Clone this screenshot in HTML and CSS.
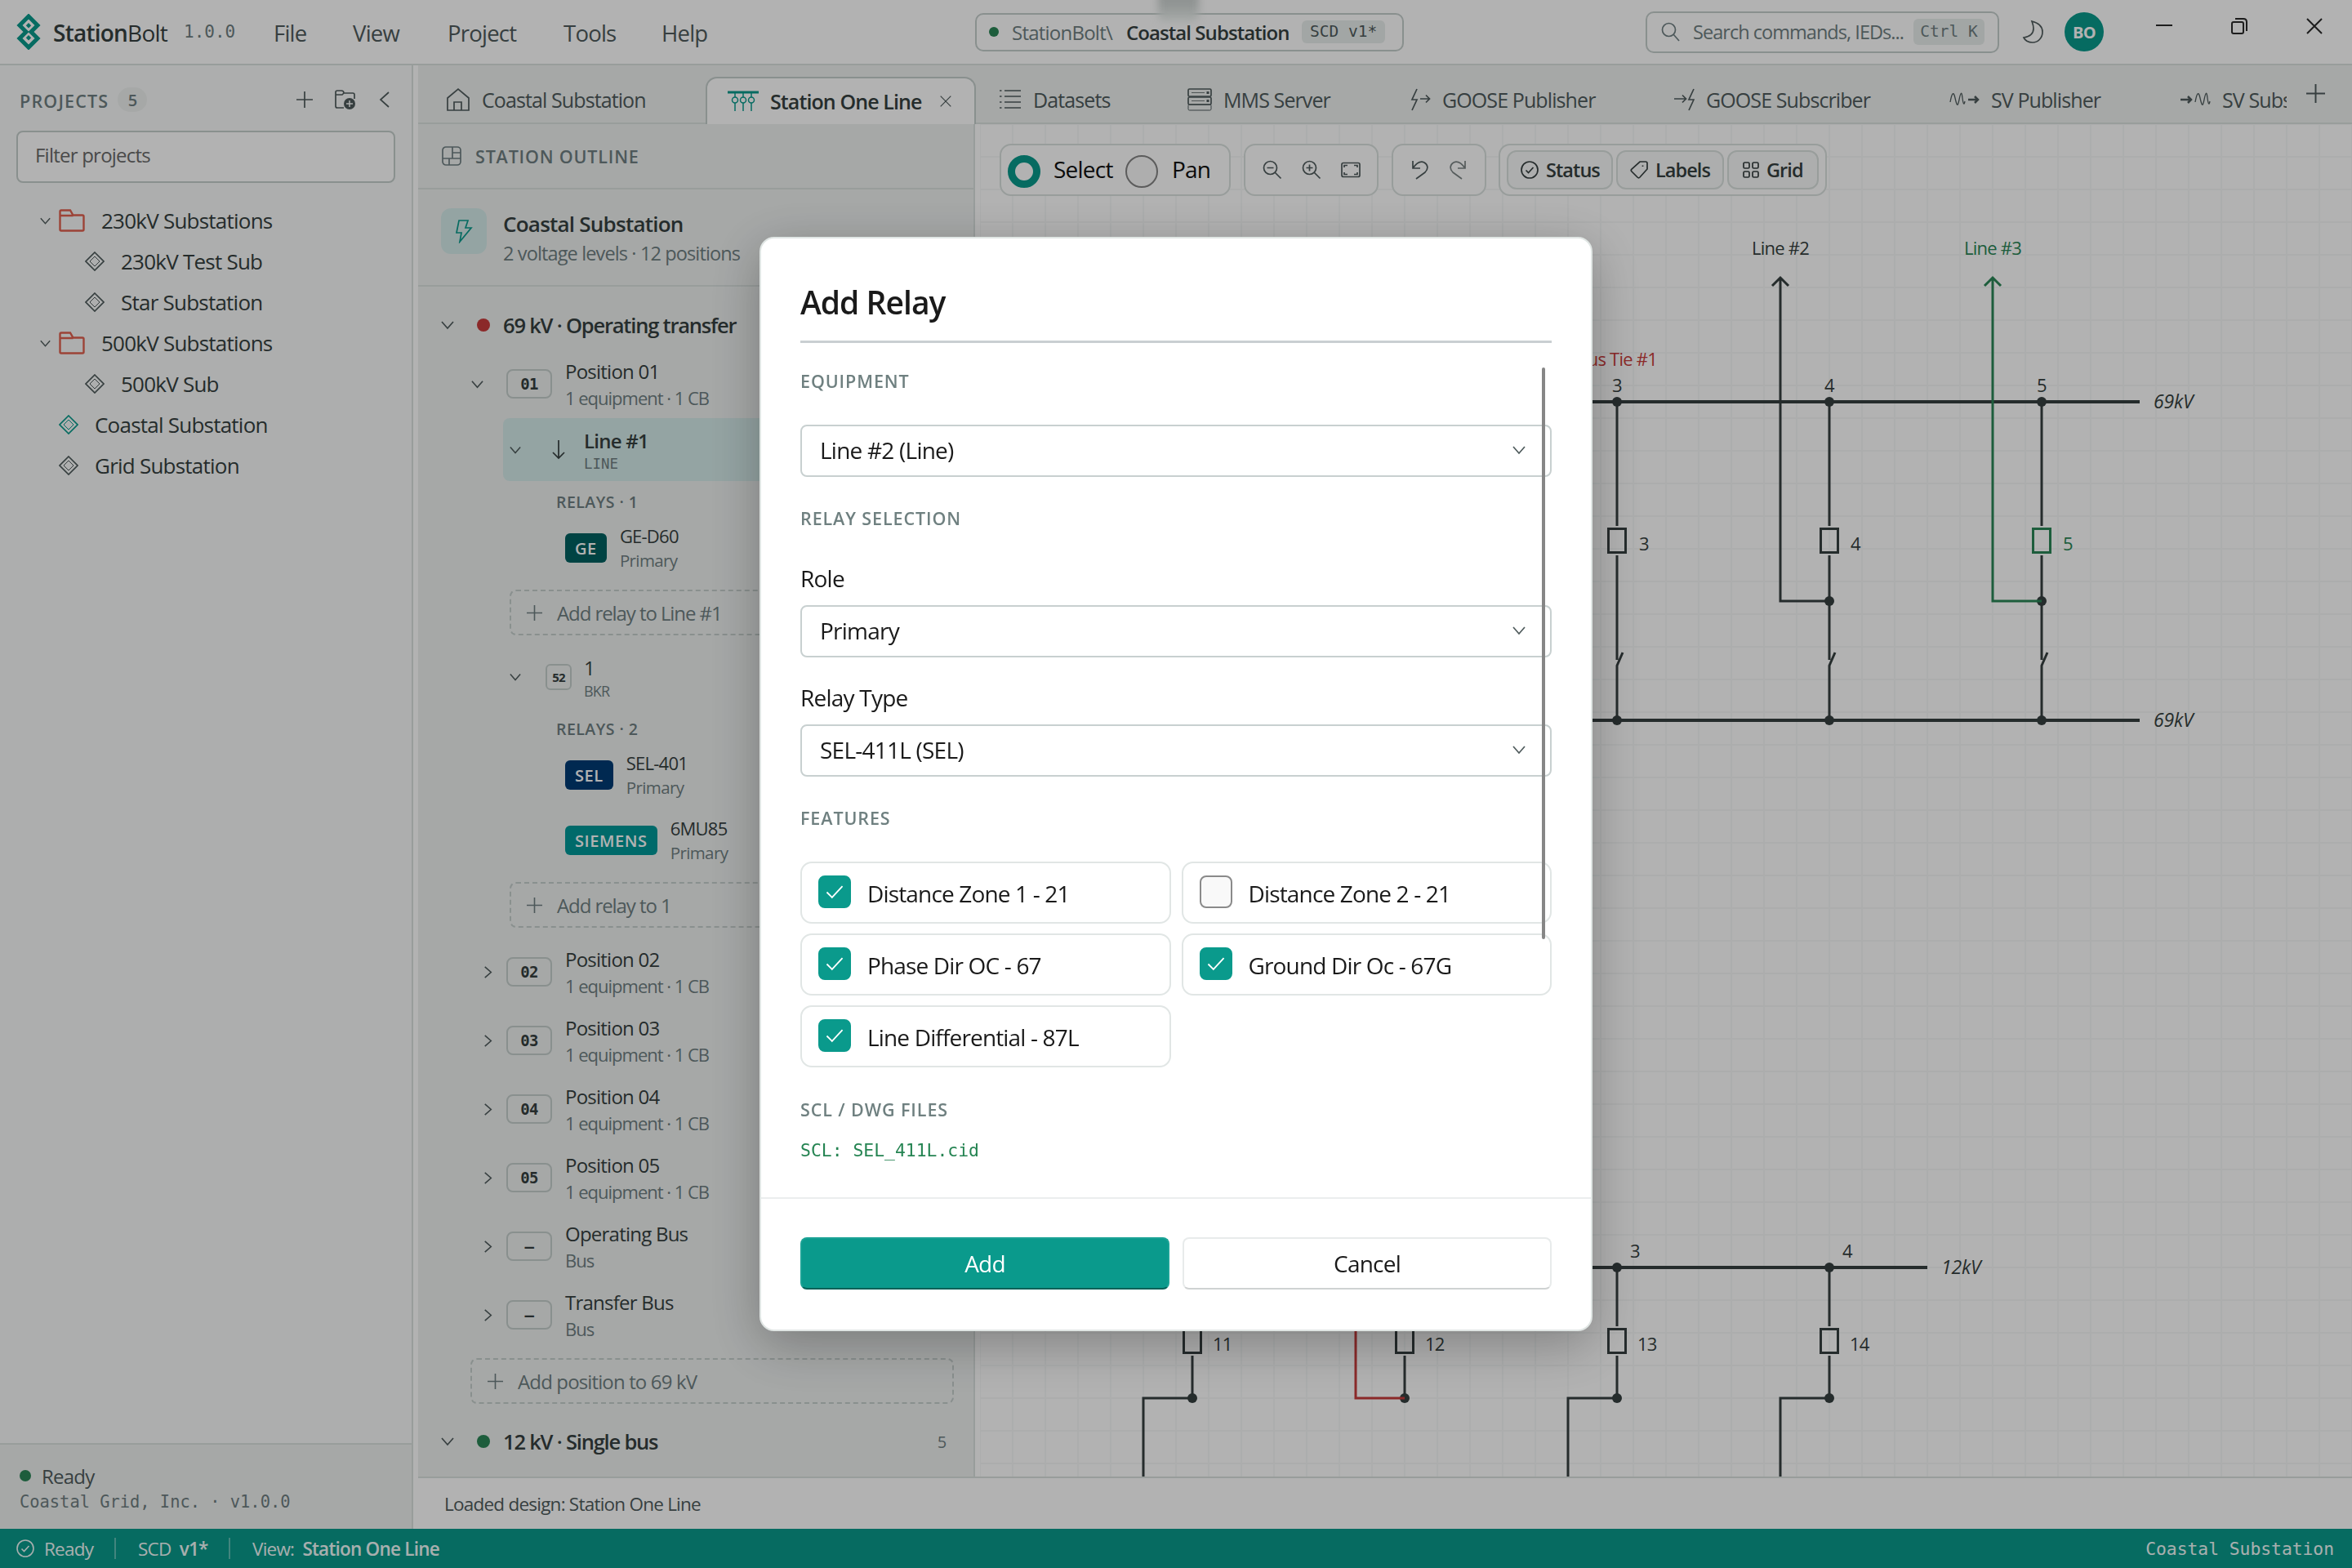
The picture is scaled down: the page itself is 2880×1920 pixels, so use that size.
FILE: index.html
```html
<!DOCTYPE html>
<html lang="en">
<head>
<meta charset="UTF-8">
<meta name="viewport" content="width=device-width, initial-scale=1.0">
<title>StationBolt</title>
<link rel="stylesheet" href="styles.css">
</head>
<body>
<!-- Icon sprite -->
<svg class="sprite">
<symbol id="i-down" viewBox="0 0 16 16"><path d="M1 4l7 8 7-8"/></symbol>
<symbol id="i-right" viewBox="0 0 16 16"><path d="M4 1l8 7-8 7"/></symbol>
<symbol id="i-left" viewBox="0 0 20 20"><path d="M15 1L5 10l10 9"/></symbol>
<symbol id="i-plus" viewBox="0 0 20 20"><path d="M10 0v20M0 10h20"/></symbol>
<symbol id="i-x" viewBox="0 0 20 20"><path d="M1 1l18 18M19 1L1 19"/></symbol>
<symbol id="i-folder" viewBox="0 0 32 28"><path d="M1.500 8V3q0-1.500 1.500-1.500h11l3.500 6H29q1.500 0 1.500 1.500v16q0 1.500-1.500 1.500H3q-1.500 0-1.500-1.500V8h16"/></symbol>
<symbol id="i-diamond" viewBox="0 0 24 24"><path d="M12 1l11 11-11 11L1 12z"/><path stroke-width="1" d="M12 6l6 6-6 6-6-6z"/></symbol>
<symbol id="i-check" viewBox="0 0 20 16"><path d="M1 8l6 6L19 1"/></symbol>
<symbol id="i-okay" viewBox="0 0 22 22"><circle cx="11" cy="11" r="10"/><path d="M6.500 11.500l3 3 6-6.500"/></symbol>
</svg>

<header class="titlebar">
<svg class="logo" viewBox="0 0 30 44"><path d="M15 3l11 11-8 8 8 8-11 11L4 30l8-8-8-8z"/><path class="logo-dot" d="M15 11l3.200 3.200-3.200 3.200-3.200-3.200zM15 26l3.200 3.200-3.200 3.200-3.200-3.200z"/></svg>
<span class="brand"><b>Station</b>Bolt</span>
<span class="version mono">1.0.0</span>
<nav class="menu"><span>File</span><span>View</span><span>Project</span><span>Tools</span><span>Help</span></nav>
<div class="crumb"><i class="dot"></i><span class="crumb-root">StationBolt\</span><b>Coastal Substation</b><span class="chip mono">SCD v1*</span></div>
<div class="search"><svg class="ic" width="24" height="24" viewBox="0 0 24 24"><circle cx="9.500" cy="9.500" r="8"/><path d="M15 15l7 8"/></svg><span>Search commands, IEDs...</span><kbd class="mono">Ctrl K</kbd></div>
<svg class="moon ic" width="28" height="30" viewBox="0 0 28 30"><path d="M13 2c8 2 13 6 13 13 0 8-6 13-12 13-5 0-9-2-11-6 6-1 12-4 12-11 0-4-1-6-2-9z"/></svg>
<span class="avatar">BO</span>
<div class="winctl">
<svg class="ic" width="20" height="20" viewBox="0 0 20 20"><path d="M0 9h20"/></svg>
<svg class="ic" width="20" height="20" viewBox="0 0 20 20"><rect x="1" y="5" width="14" height="14" rx="2"/><path d="M5 1h10q4 0 4 4v11"/></svg>
<svg class="ic" width="20" height="20"><use href="#i-x"/></svg>
</div>
</header>

<div class="workspace">
<!-- Project explorer -->
<aside class="projects">
<div class="projects-head"><h2>PROJECTS</h2><span class="count">5</span>
<svg class="ic p-add" width="20" height="20"><use href="#i-plus"/></svg>
<svg class="ic p-folder" width="26" height="26" viewBox="0 0 26 26"><path d="M12 23H4q-2 0-2-2V4q0-2 2-2h5q3 0 3 3h11q2 0 2 2v5M2 7h8l2-2"/><circle class="solid" cx="19" cy="18" r="7"/><path class="knock" d="M19 14v8M15 18h8"/></svg>
<svg class="ic p-hide" width="20" height="20"><use href="#i-left"/></svg>
</div>
<div class="filter">Filter projects</div>
<ul class="ptree">
<li class="folder"><svg class="ic chev" width="13" height="13"><use href="#i-down"/></svg><svg class="ic red" width="32" height="28"><use href="#i-folder"/></svg>230kV Substations</li>
<li class="child"><svg class="ic" width="24" height="24"><use href="#i-diamond"/></svg>230kV Test Sub</li>
<li class="child"><svg class="ic" width="24" height="24"><use href="#i-diamond"/></svg>Star Substation</li>
<li class="folder"><svg class="ic chev" width="13" height="13"><use href="#i-down"/></svg><svg class="ic red" width="32" height="28"><use href="#i-folder"/></svg>500kV Substations</li>
<li class="child"><svg class="ic" width="24" height="24"><use href="#i-diamond"/></svg>500kV Sub</li>
<li><svg class="ic teal" width="24" height="24"><use href="#i-diamond"/></svg>Coastal Substation</li>
<li><svg class="ic" width="24" height="24"><use href="#i-diamond"/></svg>Grid Substation</li>
</ul>
<div class="projects-foot"><p><i class="dot"></i>Ready</p><p class="mono">Coastal Grid, Inc. · v1.0.0</p></div>
</aside>

<main>
<div class="tabs">
<div class="tab"><svg class="ic" width="30" height="30" viewBox="0 0 30 30"><path d="M2 13L15 2l13 11v15H2zM10 28V18h9v10"/></svg>Coastal Substation</div>
<div class="tab active"><svg class="ic teal" width="38" height="26" viewBox="0 0 38 26"><path stroke-width="3" d="M0 2h38"/><path stroke-width="1.500" d="M9 3v5M19 3v5M29 3v5M9 15v10M19 15v10M29 15v10"/><g stroke-width="1.500"><circle cx="9" cy="11.500" r="3.500"/><circle cx="19" cy="11.500" r="3.500"/><circle cx="29" cy="11.500" r="3.500"/></g></svg>Station One Line<svg class="ic tab-x" width="14" height="14"><use href="#i-x"/></svg></div>
<div class="tab"><svg class="ic" width="27" height="26" viewBox="0 0 27 26"><path d="M6 2h20M6 9h20M6 16h20M6 23h20M0 2h2.500M0 9h2.500M0 16h2.500M0 23h2.500"/></svg>Datasets</div>
<div class="tab"><svg class="ic" width="30" height="28" viewBox="0 0 30 28"><rect x="1" y="1" width="28" height="9" rx="1.500"/><rect x="1" y="11" width="28" height="9" rx="1.500"/><rect x="1" y="20" width="28" height="7" rx="1.500" stroke-width="1"/><path stroke-width=".8" d="M5 5.500h16M5 15.500h16"/><path stroke-width="3" d="M23.500 5.500h3M23.500 15.500h3"/></svg>MMS Server</div>
<div class="tab"><svg class="ic" width="25" height="28" viewBox="0 0 25 28"><path d="M8 1L2 14h6L2 27M12 13h11M19 8.500l4.500 4.500-4.500 4.500"/></svg>GOOSE Publisher</div>
<div class="tab"><svg class="ic" width="25" height="28" viewBox="0 0 25 28"><path d="M24 1l-6 13h6l-6 13M0 13h14M10 8.500l4.500 4.500-4.500 4.500"/></svg>GOOSE Subscriber</div>
<div class="tab"><svg class="ic" width="37" height="20" viewBox="0 0 37 20"><path stroke-width="1.300" d="M1 13C3 2 5-1 7 8s3 12 5 2 3-10 4-2 2 9 3 4"/><path stroke-width="2.500" d="M23 10h12M31 6l4 4-4 4"/></svg>SV Publisher</div>
<div class="tab clip"><svg class="ic" width="37" height="20" viewBox="0 0 37 20"><path stroke-width="1.300" d="M18 13C20 2 22-1 24 8s3 12 5 2 3-10 4-2 2 9 3 4"/><path stroke-width="2.500" d="M0 10h13M9 6l4 4-4 4"/></svg>SV Subscriber</div>
<div class="tab-add"><svg class="ic" width="23" height="23"><use href="#i-plus"/></svg></div>
</div>

<div class="editor">
<!-- Station outline -->
<section class="outline">
<div class="outline-head"><svg class="ic" width="24" height="24" viewBox="0 0 24 24"><rect x="1" y="1" width="22" height="22" rx="4"/><path d="M13 1v14M1 15h22M13 8h10M9 15v8"/></svg><h2>STATION OUTLINE</h2></div>
<div class="station"><span class="bolt"><svg class="ic teal" width="22" height="30" viewBox="0 0 22 30"><path d="M5 2h11l-3 9h7L6 28l2-11H2z"/></svg></span><div><h3>Coastal Substation</h3><p>2 voltage levels · 12 positions</p></div></div>
<div class="otree">
<div class="level"><svg class="ic" width="16" height="16"><use href="#i-down"/></svg><i class="dot lg hot"></i><b>69 kV · Operating transfer</b></div>
<div class="pos open"><svg class="ic" width="15" height="15"><use href="#i-down"/></svg><span class="num mono">01</span><div><p>Position 01</p><small>1 equipment · 1 CB</small></div></div>

<div class="equip selected"><svg class="ic" width="14" height="14"><use href="#i-down"/></svg><span class="glyph"><svg class="ic dark" width="18" height="24" viewBox="0 0 18 24"><path d="M9 0v22M2 15l7 7 7-7"/></svg></span><div><p>Line #1</p><small class="mono">LINE</small></div></div>
<div class="relays-title">RELAYS · 1</div>
<div class="relay"><span class="tag ge">GE</span><div><p>GE-D60</p><small>Primary</small></div></div>
<div class="add"><svg class="ic" width="19" height="19"><use href="#i-plus"/></svg>Add relay to Line #1</div>

<div class="equip next"><svg class="ic" width="14" height="14"><use href="#i-down"/></svg><span class="glyph"><span class="ansi">52</span></span><div><p>1</p><small>BKR</small></div></div>
<div class="relays-title">RELAYS · 2</div>
<div class="relay"><span class="tag sel">SEL</span><div><p>SEL-401</p><small>Primary</small></div></div>
<div class="relay second"><span class="tag siemens">SIEMENS</span><div><p>6MU85</p><small>Primary</small></div></div>
<div class="add last"><svg class="ic" width="19" height="19"><use href="#i-plus"/></svg>Add relay to 1</div>

<div class="pos"><svg class="ic" width="15" height="15"><use href="#i-right"/></svg><span class="num mono">02</span><div><p>Position 02</p><small>1 equipment · 1 CB</small></div></div>
<div class="pos"><svg class="ic" width="15" height="15"><use href="#i-right"/></svg><span class="num mono">03</span><div><p>Position 03</p><small>1 equipment · 1 CB</small></div></div>
<div class="pos"><svg class="ic" width="15" height="15"><use href="#i-right"/></svg><span class="num mono">04</span><div><p>Position 04</p><small>1 equipment · 1 CB</small></div></div>
<div class="pos"><svg class="ic" width="15" height="15"><use href="#i-right"/></svg><span class="num mono">05</span><div><p>Position 05</p><small>1 equipment · 1 CB</small></div></div>
<div class="pos"><svg class="ic" width="15" height="15"><use href="#i-right"/></svg><span class="num mono">–</span><div><p>Operating Bus</p><small>Bus</small></div></div>
<div class="pos"><svg class="ic" width="15" height="15"><use href="#i-right"/></svg><span class="num mono">–</span><div><p>Transfer Bus</p><small>Bus</small></div></div>
<div class="add wide"><svg class="ic" width="19" height="19"><use href="#i-plus"/></svg>Add position to 69 kV</div>
<div class="level"><svg class="ic" width="16" height="16"><use href="#i-down"/></svg><i class="dot lg"></i><b>12 kV · Single bus</b><span class="level-count">5</span></div>
</div>
</section>

<!-- One line diagram -->
<section class="canvas">
<svg class="diagram" width="1680" height="1656" viewBox="1200 152 1680 1656">
<g class="wire bus"><path d="M1400 492H2620M1400 882H2620M1300 1552H2360"/></g>
<g class="wire">
<path d="M1980 492v152M1980 680v128M1987 799l-7 16v67"/>
<path d="M2240 492v152M2240 680v128M2247 799l-7 16v67"/>
<path d="M2500 492v152M2500 680v128M2507 799l-7 16v67"/>
<path d="M1969.500 647.500h21v29h-21zM2229.500 647.500h21v29h-21z"/>
<path d="M2180 341v395h60M2170 350l10-10 10 10"/>
<path d="M1460 1552v72M1460 1660v52h-60v96M1720 1552v72M1720 1660v52M1980 1552v72M1980 1660v52h-60v96M2240 1552v72M2240 1660v52h-60v96"/>
<path d="M1449.500 1627.500h21v29h-21zM1709.500 1627.500h21v29h-21zM1969.500 1627.500h21v29h-21zM2229.500 1627.500h21v29h-21z"/>
</g>
<g class="node">
<circle cx="1980" cy="492" r="6"/><circle cx="2240" cy="492" r="6"/><circle cx="2500" cy="492" r="6"/>
<circle cx="1980" cy="882" r="6"/><circle cx="2240" cy="882" r="6"/><circle cx="2500" cy="882" r="6"/>
<circle cx="2240" cy="736" r="6"/><circle cx="2500" cy="736" r="6"/>
<circle cx="1980" cy="1552" r="6"/><circle cx="2240" cy="1552" r="6"/>
<circle cx="1460" cy="1712" r="6"/><circle cx="1720" cy="1712" r="6"/><circle cx="1980" cy="1712" r="6"/><circle cx="2240" cy="1712" r="6"/>
</g>
<g class="wire green"><path d="M2440 341v395h60M2430 350l10-10 10 10M2489.500 647.500h21v29h-21z"/></g>
<g class="wire hot"><path d="M1660 1600v112h60"/></g>
<g class="mid"><text x="2180" y="312">Line #2</text><text x="2440" y="312" class="green">Line #3</text><text x="1980" y="480">3</text><text x="2240" y="480">4</text><text x="2500" y="480">5</text></g>
<text x="2029" y="448" class="hot end">Bus Tie #1</text>
<text x="2007" y="674">3</text><text x="2266" y="674">4</text><text x="2526" y="674" class="green">5</text>
<text x="2637" y="500" class="kv">69kV</text><text x="2637" y="890" class="kv">69kV</text><text x="2377" y="1560" class="kv">12kV</text>
<text x="1996" y="1540">3</text><text x="2256" y="1540">4</text>
<text x="1485" y="1654">11</text><text x="1745" y="1654">12</text><text x="2005" y="1654">13</text><text x="2265" y="1654">14</text>
</svg>
<div class="toolbar">
<div class="tools modes"><i class="radio on"></i><span>Select</span><i class="radio"></i><span>Pan</span></div>
<div class="tools zooms">
<svg class="ic" width="24" height="24" viewBox="0 0 24 24"><circle cx="9.500" cy="9.500" r="8"/><path d="M15 15l7.500 7.500M5.500 9.500h8"/></svg>
<svg class="ic" width="24" height="24" viewBox="0 0 24 24"><circle cx="9.500" cy="9.500" r="8"/><path d="M15 15l7.500 7.500M5.500 9.500h8M9.500 5.500v8"/></svg>
<svg class="ic" width="24" height="24" viewBox="0 0 24 24"><rect x="1" y="3.500" width="22" height="17" rx="2"/><path d="M4 9V6.500h4M16 6.500h4V9M4 15v2.500h4M16 17.500h4V15"/></svg>
</div>
<div class="tools history">
<svg class="ic" width="22" height="24" viewBox="0 0 22 24"><path d="M2 1v9h9M2 10c5-7 10-9 14-7 5 3 5 8 1 12l-11 8"/></svg>
<svg class="ic redo" width="22" height="24" viewBox="0 0 22 24"><path d="M20 1v9h-9M20 10c-5-7-10-9-14-7-5 3-5 8-1 12l11 8"/></svg>
</div>
<div class="tools toggles">
<span class="toggle"><svg class="ic dark" width="22" height="22"><use href="#i-okay"/></svg>Status</span>
<span class="toggle"><svg class="ic dark" width="22" height="22" viewBox="0 0 22 22"><path d="M12 1h7q2 0 2 2v7l-9 10q-1.500 1.500-3 0l-7-7q-1.500-1.500 0-3zM15.500 5.500v1.500"/></svg>Labels</span>
<span class="toggle"><svg class="ic dark" width="20" height="22" viewBox="0 0 20 22"><rect x="1" y="2" width="7" height="7" rx="1.500"/><rect x="12" y="2" width="7" height="7" rx="1.500"/><rect x="1" y="13" width="7" height="7" rx="1.500"/><rect x="12" y="13" width="7" height="7" rx="1.500"/></svg>Grid</span>
</div>
</div>
</section>
</div>
<div class="message">Loaded design: Station One Line</div>
</main>
</div>

<footer class="statusbar"><svg class="ic" width="22" height="22"><use href="#i-okay"/></svg><span class="s1">Ready</span><i></i><span class="s2">SCD&nbsp; <b>v1*</b></span><i></i><span class="s3">View:&nbsp; <b>Station One Line</b></span><span class="where mono">Coastal Substation</span></footer>

<!-- Modal -->
<div class="overlay">
<div class="smear"></div>
<form class="modal">
<div class="modal-body">
<h1>Add Relay</h1>
<h4 class="h-equip">EQUIPMENT</h4>
<div class="select">Line #2 (Line)<svg class="ic" width="16" height="16"><use href="#i-down"/></svg></div>
<h4 class="h-relay">RELAY SELECTION</h4>
<label>Role</label>
<div class="select">Primary<svg class="ic" width="16" height="16"><use href="#i-down"/></svg></div>
<label class="l-type">Relay Type</label>
<div class="select">SEL-411L (SEL)<svg class="ic" width="16" height="16"><use href="#i-down"/></svg></div>
<h4 class="h-feat">FEATURES</h4>
<div class="features">
<div class="feature"><span class="box on"><svg class="ic" width="22" height="17"><use href="#i-check"/></svg></span>Distance Zone 1 - 21</div>
<div class="feature"><span class="box"></span>Distance Zone 2 - 21</div>
<div class="feature"><span class="box on"><svg class="ic" width="22" height="17"><use href="#i-check"/></svg></span>Phase Dir OC - 67</div>
<div class="feature"><span class="box on"><svg class="ic" width="22" height="17"><use href="#i-check"/></svg></span>Ground Dir Oc - 67G</div>
<div class="feature"><span class="box on"><svg class="ic" width="22" height="17"><use href="#i-check"/></svg></span>Line Differential - 87L</div>
</div>
<h4 class="h-files">SCL / DWG FILES</h4>
<p class="scl mono">SCL: SEL_411L.cid</p>
<i class="scrollbar"></i>
</div>
<div class="modal-foot"><button type="button" class="primary">Add</button><button type="button">Cancel</button></div>
</form>
</div>
</body>
</html>
```

FILE: styles.css
```css
:root{
--ink:#363f40;
--text:#4f5b5c;
--muted:#6f7f82;
--line:#dae1df;
--line-strong:#c5cecc;
--panel:#eef1f0;
--side:#f8faf9;
--teal:#0a9a8c;
--green:#2a8656;
--red:#c83c3c;
}
*{margin:0;padding:0;box-sizing:border-box;}
html,body{width:2880px;height:1920px;overflow:hidden;}
body{display:flex;flex-direction:column;font-family:"Open Sans","Noto Sans",sans-serif;font-size:24px;letter-spacing:-0.032em;color:var(--ink);background:#fff;}
b,h3{font-weight:600;}
ul{list-style:none;}
small{display:block;}
span,p,b,label,h1,h2,h3,h4{white-space:nowrap;}
.mono{font-family:"DejaVu Sans Mono","Liberation Mono",monospace;letter-spacing:0;}
.sprite{position:absolute;width:0;height:0;}
.ic{fill:none;stroke:currentColor;stroke-width:1.700;flex:none;display:block;color:var(--text);}
.ic.teal{color:var(--teal);}
.ic.red{color:#e0604f;stroke-width:2.400;}
.ic.dark{color:var(--ink);}
.dot{width:14px;height:14px;border-radius:50%;background:var(--green);flex:none;}
.dot.lg{width:16px;height:16px;}
.dot.hot{background:var(--red);}

/* Title bar */
.titlebar{height:80px;flex:none;border-bottom:2px solid var(--line);display:flex;align-items:center;padding-left:20px;}
.logo{width:30px;height:44px;fill:none;stroke:var(--teal);stroke-width:5;}
.logo-dot{fill:var(--teal);stroke:none;}
.brand{width:160px;margin-left:15px;padding-top:2px;font-size:28px;font-weight:500;}
.version{width:110px;font-size:21px;color:var(--muted);}
.menu{display:grid;grid-template-columns:97px 116px 142px 120px 384px;padding-top:2px;font-size:27.500px;color:var(--text);}
.crumb{width:525px;height:47px;border:2px solid var(--line-strong);border-radius:10px;display:flex;align-items:center;padding-left:15px;}
.crumb .dot{width:12px;height:12px;margin-right:16px;}
.crumb-root{width:140px;color:var(--muted);}
.crumb b{width:215px;letter-spacing:-0.039em;}
.chip{padding:0 10px;height:28px;line-height:27px;border-radius:6px;background:#e9eeec;font-size:19.500px;color:var(--text);}
.search{width:433px;height:51px;margin-left:296px;border:2px solid var(--line-strong);border-radius:10px;display:flex;align-items:center;padding-left:17px;color:var(--muted);}
.search span{width:270px;margin-left:15px;font-size:23.500px;letter-spacing:-0.041em;}
.search .ic{color:var(--muted);}
.search kbd{width:87px;height:32px;line-height:31px;border-radius:6px;background:#e9eeec;font-size:19.500px;text-align:center;}
.moon{margin-left:27px;}
.avatar{width:48px;height:48px;margin-left:25px;border-radius:50%;background:var(--teal);color:#fff;font-weight:700;font-size:20px;line-height:49px;text-align:center;}
.winctl{display:flex;gap:72px;margin-left:64px;padding-bottom:14px;}
.winctl .ic{color:#2a2a2a;stroke-width:2;}

.workspace{flex:1;display:flex;min-height:0;}

/* Project explorer */
.projects{width:506px;margin-right:6px;flex:none;background:var(--side);border-right:2px solid var(--line);display:flex;flex-direction:column;}
.projects-head{height:80px;display:flex;align-items:center;padding:4px 0 0 24px;color:var(--muted);}
h2{font-size:21.500px;font-weight:600;letter-spacing:.038em;color:var(--muted);}
.projects-head h2{width:120px;padding-top:2px;letter-spacing:.055em;}
.count{width:36px;height:30px;border-radius:15px;background:var(--panel);text-align:center;font-size:20px;font-weight:600;line-height:31px;}
.p-add{margin-left:183px;}
.p-folder{margin-left:26px;}
.p-hide{margin-left:26px;}
.ic .solid{fill:currentColor;stroke:none;}
.ic .knock{stroke:var(--side);stroke-width:1.500;}
.filter{height:64px;margin:0 20px 21px;border:2px solid var(--line-strong);border-radius:8px;background:#fff;padding-left:21px;line-height:56px;color:#6a6a6a;}
.ptree{flex:1;font-size:26px;}
.ptree li{height:50px;display:flex;align-items:center;padding-left:72px;gap:20px;}
.ptree .folder{padding-left:49px;}
.ptree .folder .chev{margin-right:-10px;}
.ptree .child{padding-left:104px;}
.projects-foot{height:105px;padding:22px 0 0 24px;background:var(--panel);border-top:2px solid var(--line);color:var(--text);}
.projects-foot p{display:flex;align-items:center;gap:13px;height:32px;}
.projects-foot .mono{font-size:20.400px;color:var(--muted);}

/* Tabs */
main{flex:1;min-width:0;display:flex;flex-direction:column;}
.tabs{height:72px;flex:none;background:var(--panel);border-bottom:2px solid var(--line);display:grid;grid-template-columns:352px 331px 230px 273px 323px 337px 283px 159px 80px;}
.tab{display:flex;align-items:center;gap:14px;padding:12px 0 0 29px;color:var(--text);font-weight:500;white-space:nowrap;overflow:hidden;height:72px;letter-spacing:-0.036em;font-size:25px;}
.tab:first-child{padding-left:34px;}
.tab.active{margin-top:14px;height:58px;padding:0 0 0 25px;background:#fff;border:2px solid var(--line-strong);border-bottom:0;border-radius:14px 14px 0 0;color:var(--ink);font-weight:600;}
.tab-x{margin-left:8px;}
.tab-add{padding:23px 0 0 24px;}

.editor{flex:1;display:flex;min-height:0;}

/* Outline */
.outline{width:682px;flex:none;background:var(--panel);border-right:2px solid var(--line);overflow:hidden;display:flex;flex-direction:column;}
.outline-head{height:80px;flex:none;border-bottom:2px solid var(--line);display:flex;align-items:center;gap:17px;padding-left:29px;}
.outline-head .ic{color:var(--muted);}
.station{height:119px;flex:none;border-bottom:2px solid var(--line);display:flex;gap:20px;padding:23px 0 0 28px;}
.bolt{width:56px;height:56px;border-radius:12px;background:#d5ebea;display:flex;align-items:center;justify-content:center;}
.station h3{font-size:26px;line-height:38px;}
.station p{font-size:23.500px;line-height:34px;color:var(--muted);letter-spacing:-0.037em;}
.otree{padding:17px 24px 0 28px;}
.otree p{font-size:24px;line-height:32px;}
.otree small{font-size:22px;line-height:32px;color:var(--muted);letter-spacing:-0.046em;}
.otree small.mono{letter-spacing:0;}
.level{height:60px;display:flex;align-items:center;font-size:25.500px;letter-spacing:-0.047em;}
.level .dot{margin:0 16px 0 28px;}
.level-count{margin-left:auto;padding-right:10px;font-size:20px;color:var(--muted);}
.pos{height:84px;display:flex;align-items:center;padding:0 0 0 50px;}
.pos p{padding-top:2px;}
.num{width:56px;height:36px;margin:0 16px 0 15px;border:2px solid var(--line-strong);border-radius:8px;text-align:center;line-height:33px;font-size:19px;font-weight:700;letter-spacing:-0.03em;}
.pos.open{padding-left:37px;}
.pos.open .num{margin-left:28px;}
.equip{height:78px;margin-left:76px;display:flex;align-items:center;padding-left:8px;border-radius:8px;}
.equip div{padding-top:6px;}
.equip.selected{background:#d5ebea;height:77px;margin-bottom:1px;}
.equip.selected p{font-weight:600;}
.equip.next{margin-top:12px;}
.equip p{line-height:28px;}
.equip small{font-size:18px;line-height:28px;}
.equip small.mono{font-size:17.400px;}
.glyph{width:32px;margin:0 15px 0 30px;display:flex;justify-content:center;}
.ansi{width:32px;height:32px;border:2px solid var(--line-strong);border-radius:6px;font-size:15px;font-weight:700;line-height:28px;text-align:center;}
.relays-title{height:50px;line-height:50px;padding-left:141px;font-size:19.500px;font-weight:600;letter-spacing:.024em;color:var(--muted);}
.relay{height:62px;margin-bottom:20px;padding-left:152px;display:flex;align-items:center;gap:16px;}
.relay.second{margin-top:-2px;}
.relay p{font-size:22px;line-height:30px;}
.relay small{font-size:20.500px;line-height:30px;letter-spacing:-0.03em;}
.tag{height:36px;padding:0 12px;border-radius:6px;color:#fff;font-size:20px;font-weight:600;line-height:37px;letter-spacing:.03em;}
.ge{background:#006060;}
.sel{background:#003c75;}
.siemens{background:#009999;}
.add{height:56px;margin-left:84px;padding-left:19px;display:flex;align-items:center;gap:18px;border:2px dashed var(--line-strong);border-radius:8px;color:var(--muted);letter-spacing:-0.045em;}
.add .ic{color:var(--muted);}
.add.last{margin-bottom:12px;}
.add.wide{margin:11px 0 16px 36px;letter-spacing:-0.036em;}

/* Canvas */
.canvas{flex:1;position:relative;padding-left:6px;overflow:hidden;}
.diagram{display:block;background:linear-gradient(90deg,#f6f8f8 2px,transparent 2px) -1px 0/40px 40px,linear-gradient(#f6f8f8 2px,transparent 2px) 0 -1px/40px 40px;font-size:22px;}
.diagram text{fill:var(--ink);}
.mid text{text-anchor:middle;}
.diagram .end{text-anchor:end;}
.diagram .kv{font-style:italic;font-size:23px;letter-spacing:-0.01em;}
.wire{fill:none;stroke:var(--ink);stroke-width:3;}
.wire.bus{stroke-width:4;}
.wire.green{stroke:var(--green);}
.wire.hot{stroke:var(--red);}
.diagram text.green{fill:var(--green);}
.diagram text.hot{fill:var(--red);}
.node{fill:var(--ink);}
.toolbar{position:absolute;left:30px;top:24px;display:flex;gap:16px;}
.tools{height:64px;border:2px solid var(--line);border-radius:14px;background:#fff;display:flex;align-items:center;}
.modes{width:283px;padding-left:8px;font-size:28px;color:#111;padding-bottom:2px;}
.modes span{width:88px;margin-left:16px;}
.modes span:last-child{width:auto;margin-left:17px;}
.radio{width:40px;height:40px;border:2px solid #858585;border-radius:50%;background:#fafafa;margin-top:6px;}
.radio.on{border:9px solid var(--teal);background:#fff;}
.zooms{width:165px;justify-content:center;gap:24px;}
.history{width:116px;justify-content:center;gap:24px;}
.redo{opacity:.75;}
.toggles{width:402px;gap:4px;padding-left:8px;margin-left:-1px;}
.toggle{width:130px;height:48px;border:2px solid var(--line);border-radius:12px;background:var(--side);display:flex;align-items:center;gap:9px;padding-left:15px;font-size:23.500px;font-weight:600;letter-spacing:-0.04em;}
.toggle:nth-child(2){width:132px;}
.toggle:last-child{width:112px;padding-left:17px;}
.message{height:64px;flex:none;border-top:2px solid var(--line);padding-left:32px;line-height:64px;font-size:22.500px;color:var(--text);}

/* Status bar */
.statusbar{height:48px;flex:none;background:var(--teal);color:#f1fbfa;display:flex;align-items:center;padding:0 22px 0 20px;font-size:22.500px;}
.statusbar .ic{color:#f1fbfa;stroke-width:1.600;}
.statusbar i{width:2px;height:26px;background:#5fbfb5;}
.s1{margin-left:12px;width:86px;}
.s2{margin-left:27px;width:111px;}
.s3{margin-left:27px;}
.where{margin-left:auto;font-size:21.300px;}

/* Modal */
.overlay{position:fixed;inset:0;background:rgba(0,0,0,.3);z-index:100;}
.smear{position:absolute;left:1418px;top:-12px;width:50px;height:38px;background:linear-gradient(#8f9392 40%,#a6aaa8);filter:blur(5px);border-radius:8px;}
.modal{position:absolute;left:930px;top:290px;width:1020px;height:1340px;background:#fff;border:2px solid #e0e6e4;border-radius:18px;box-shadow:0 16px 64px rgba(0,0,0,.28);display:flex;flex-direction:column;color:#1a1a1a;font-size:28px;}
.modal-body{flex:1;padding:48px 48px 0;position:relative;}
.modal h1{font-size:39px;font-weight:600;line-height:59px;height:80px;border-bottom:3px solid #c9cfd2;letter-spacing:-0.025em;}
.modal h4{font-size:21.500px;font-weight:600;line-height:32px;letter-spacing:.042em;color:#6f8080;}
.modal .h-equip{margin:31px 0 37px;}
.select{height:64px;border:2px solid #c8d0d0;border-radius:8px;padding:0 30px 2px 22px;display:flex;align-items:center;justify-content:space-between;}
.h-relay{margin:35px 0 37px;}
.modal label{display:block;line-height:40px;margin-bottom:13px;}
.modal .l-type{margin-top:29px;}
.h-feat{margin:35px 0 37px;}
.features{display:grid;grid-template-columns:1fr 1fr;gap:12px 13px;}
.feature{height:76px;border:2px solid #e1e6e5;border-radius:14px;display:flex;align-items:center;gap:20px;padding:1px 0 0 20px;letter-spacing:-0.03em;}
.box{width:40px;height:40px;border:2px solid #8a8a8a;border-radius:8px;background:#f9f9f9;display:flex;align-items:center;justify-content:center;margin-bottom:3px;}
.box.on{background:var(--teal);border-color:var(--teal);}
.box .ic{color:#fff;}
.modal .h-files{margin:36px 0 18px;}
.scl{font-size:21.400px;line-height:32px;color:#258452;}
.scrollbar{position:absolute;right:56px;top:158px;width:4px;height:700px;border-radius:2px;background:#868686;}
.modal-foot{height:162px;border-top:2px solid #ebedee;padding:47px 48px;display:flex;gap:16px;}
.modal-foot button{flex:1;height:64px;border:2px solid #e8ebeb;border-bottom-color:#cfd2d2;border-radius:8px;background:#fff;font:inherit;letter-spacing:inherit;color:#1a1a1a;}
.modal-foot .primary{background:var(--teal);border-color:#1aa295;border-bottom-color:#066158;color:#fff;}
```
